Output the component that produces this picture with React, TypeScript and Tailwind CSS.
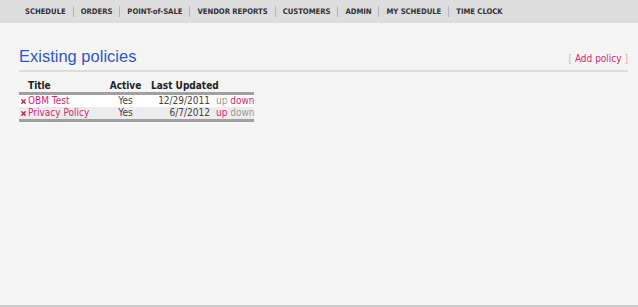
import { X } from "lucide-react";

const navItems = [
  "SCHEDULE",
  "ORDERS",
  "POINT-of-SALE",
  "VENDOR REPORTS",
  "CUSTOMERS",
  "ADMIN",
  "MY SCHEDULE",
  "TIME CLOCK",
];

const policies = [
  { title: "OBM Test", active: "Yes", updated: "12/29/2011", up: false, down: true },
  { title: "Privacy Policy", active: "Yes", updated: "6/7/2012", up: true, down: false },
];

export default function App() {
  return (
    <div className="flex h-[307px] w-[638px] flex-col bg-[#f5f5f5] font-['DejaVu_Sans_Condensed','DejaVu_Sans',sans-serif] text-[#333]">
      {/* Nav */}
      <nav className="flex h-[23px] items-center bg-[#dddddd] pl-[18px]">
        {navItems.map((item, i) => (
          <div key={item} className="flex items-center">
            {i > 0 && <span className="h-[11px] w-px bg-[#b8b8b8]" />}
            <span className="px-[7px] text-[7.7px] font-bold tracking-[-0.05px] text-[#333]">{item}</span>
          </div>
        ))}
      </nav>

      {/* Content */}
      <main className="flex-1 pl-[19px] pr-[10px] pt-[22px]">
        <div className="flex items-end justify-between border-b-2 border-[#dcdcdc] pb-[3px]">
          <h1 className="font-['Liberation_Sans',Arial,sans-serif] text-[16.5px] leading-[22px] text-[#2f55cc]">
            Existing policies
          </h1>
          <div className="pb-[1px] text-[10px] leading-[14px]">
            <span className="text-[#bbb]">[ </span>
            <a className="text-[#e0246e]">Add policy</a>
            <span className="text-[#bbb]"> ]</span>
          </div>
        </div>

        <table className="mt-[8px] w-[235px] table-fixed border-collapse text-[10px] leading-[12px]">
          <colgroup>
            <col className="w-[85px]" />
            <col className="w-[41px]" />
            <col className="w-[71px]" />
            <col className="w-[38px]" />
          </colgroup>
          <thead>
            <tr className="border-b-[3px] border-[#a0a0a0]">
              <th className="pl-[9px] text-left font-bold text-[#222]">Title</th>
              <th className="pl-[2px] text-center font-bold text-[#222]">Active</th>
              <th className="whitespace-nowrap pl-[6px] text-left font-bold text-[#222]">Last Updated</th>
              <th />
            </tr>
          </thead>
          <tbody className="border-b-[3px] border-[#a0a0a0]">
            {policies.map((p, i) => (
              <tr key={p.title} className={i % 2 === 0 ? "bg-white" : "bg-[#ececec]"}>
                <td className="py-0 pl-[1px]">
                  <span className="flex items-center gap-[1px] whitespace-nowrap text-[#e0246e]">
                    <X size={7} strokeWidth={4.5} className="text-[#cc1155]" />
                    {p.title}
                  </span>
                </td>
                <td className="pl-[2px] text-center text-[#444]">{p.active}</td>
                <td className="pr-[6px] text-right text-[#444]">{p.updated}</td>
                <td className="whitespace-nowrap pr-[1px] text-right">
                  <span className={p.up ? "text-[#e0246e]" : "text-[#999]"}>up</span>{" "}
                  <span className={p.down ? "text-[#e0246e]" : "text-[#999]"}>down</span>
                </td>
              </tr>
            ))}
          </tbody>
        </table>
      </main>

      <div className="h-[2px] bg-[#cccccc]" />
    </div>
  );
}
